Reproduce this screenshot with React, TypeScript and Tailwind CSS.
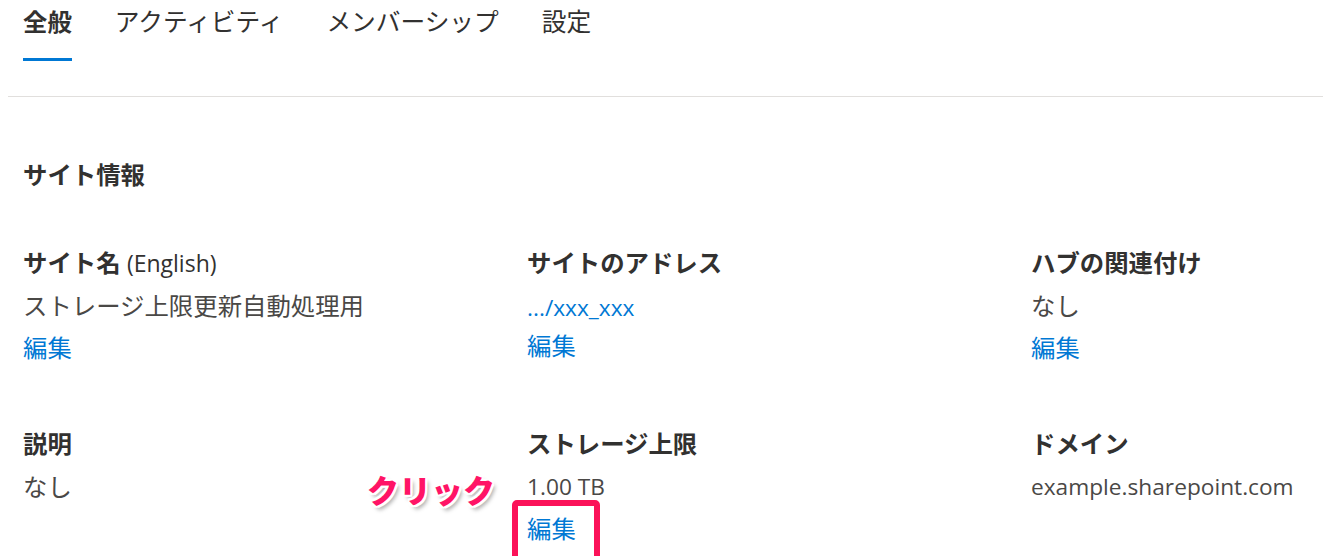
import React from 'react';

const tabs = ['全般', 'アクティビティ', 'メンバーシップ', '設定'];

interface FieldProps {
  title: React.ReactNode;
  value: React.ReactNode;
  latin?: boolean;
  link?: boolean;
  valueIsLink?: boolean;
  highlight?: boolean;
}

function Field({ title, value, latin, link, valueIsLink, highlight }: FieldProps) {
  const size = latin ? 'text-[22.7px]' : 'text-[24.4px]';
  return (
    <div className="flex flex-col">
      <div className="text-[24.4px] leading-[30px] font-bold text-[#323130]">{title}</div>
      <div
        className={
          valueIsLink
            ? `mt-[15px] ${size} leading-[30px] text-[#0078d4]`
            : `mt-[13px] ${size} leading-[30px] text-[#4a4846]`
        }
      >
        {value}
      </div>
      {link && (
        <div className={valueIsLink ? 'relative mt-[8px] w-fit' : 'relative mt-[12px] w-fit'}>
          <a className="text-[24.4px] leading-[30px] text-[#0078d4] cursor-pointer">編集</a>
          {highlight && (
            <>
              {/* annotation box around the edit link */}
              <div className="absolute left-[-15px] top-[-14px] w-[88px] h-[64px] border-[6px] border-[#fb1259] rounded-[5px]" />
              <div className="absolute left-[-160px] top-[-43px] whitespace-nowrap text-[32px] leading-[40px] font-black text-[#ff1466] [text-shadow:2px_0_0_#fff,-2px_0_0_#fff,0_2px_0_#fff,0_-2px_0_#fff,2px_2px_0_#fff,-2px_-2px_0_#fff,2px_-2px_0_#fff,-2px_2px_0_#fff,3px_4px_4px_rgba(0,0,0,0.35)]">
                クリック
              </div>
            </>
          )}
        </div>
      )}
    </div>
  );
}

export default function App() {
  return (
    <div
      className="w-[1323px] h-[556px] overflow-hidden bg-white"
      style={{ fontFamily: '"Open Sans", "Noto Sans CJK JP", sans-serif' }}
    >
      {/* Tabs */}
      <div className="flex gap-[43px] pl-[23px] pt-[6px]">
        {tabs.map((t, i) => (
          <div key={t} className="flex flex-col">
            <span
              className={
                i === 0
                  ? 'text-[24.4px] leading-[32px] font-bold text-[#323130]'
                  : 'text-[24.7px] leading-[32px] text-[#323130]'
              }
            >
              {t}
            </span>
            <div className={i === 0 ? 'mt-[20px] h-[3px] bg-[#0078d4]' : 'mt-[20px] h-[3px]'} />
          </div>
        ))}
      </div>
      <div className="ml-[8px] mt-[35px] h-px bg-[#e1dfdd]" />

      {/* Site info */}
      <div className="pl-[23px]">
        <div className="mt-[63px] text-[24.4px] leading-[30px] font-bold text-[#323130]">サイト情報</div>
        <div className="mt-[58px] grid grid-cols-[504px_504px_1fr] gap-y-[66px]">
          <Field
            title={
              <>
                サイト名 <span className="font-normal text-[23px]">(English)</span>
              </>
            }
            value="ストレージ上限更新自動処理用"
            link
          />
          <Field title="サイトのアドレス" value=".../xxx_xxx" latin valueIsLink link />
          <Field title="ハブの関連付け" value="なし" link />
          <Field title="説明" value="なし" />
          <Field title="ストレージ上限" value="1.00 TB" latin link highlight />
          <Field title="ドメイン" value="example.sharepoint.com" latin />
        </div>
      </div>
    </div>
  );
}
